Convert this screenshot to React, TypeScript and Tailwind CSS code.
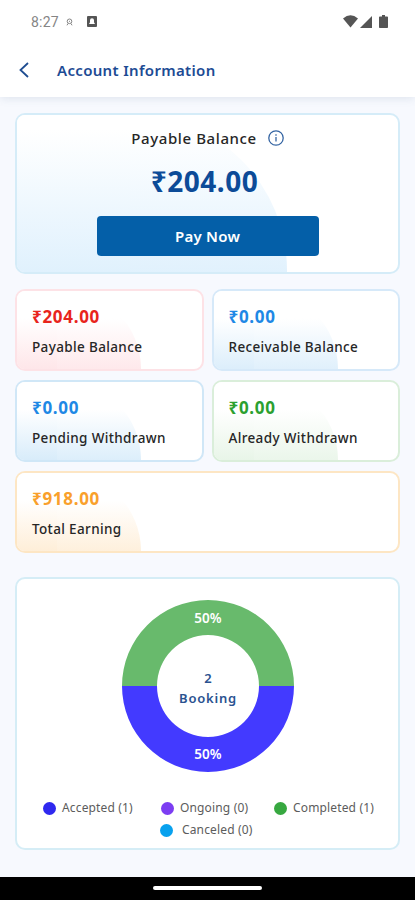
import React from "react";

interface IBalance {
  amount: string;
  label: string;
  amountColor: string;
  border: string;
  blob: string;
  wide?: boolean;
}

const balances: IBalance[] = [
  {
    amount: "₹204.00",
    label: "Payable Balance",
    amountColor: "text-[#e8241c]",
    border: "border-[#fde2e6]",
    blob: "to-[#fee6e9]",
  },
  {
    amount: "₹0.00",
    label: "Receivable Balance",
    amountColor: "text-[#1e88e5]",
    border: "border-[#d6e9f9]",
    blob: "to-[#dceefb]",
  },
  {
    amount: "₹0.00",
    label: "Pending Withdrawn",
    amountColor: "text-[#1e88e5]",
    border: "border-[#d0e7f7]",
    blob: "to-[#d8ecfa]",
  },
  {
    amount: "₹0.00",
    label: "Already Withdrawn",
    amountColor: "text-[#2ba02f]",
    border: "border-[#daeeda]",
    blob: "to-[#e8f5e8]",
  },
  {
    amount: "₹918.00",
    label: "Total Earning",
    amountColor: "text-[#f9a02b]",
    border: "border-[#fde6c4]",
    blob: "to-[#feeed8]",
    wide: true,
  },
];

const StatusBar: React.FC = () => (
  <div className="flex h-[43px] items-center pl-[31px] pr-[27px] text-[#555]">
    <span className="w-[29px] font-[Roboto] text-[14px] leading-none tracking-[0.2px] text-[#858585]">
      8:27
    </span>
    <svg className="ml-[6px] h-[8px] w-[7px]" viewBox="0 0 7 8" fill="none" stroke="#858585">
      <circle cx="3.5" cy="3.3" r="2.3" />
      <path d="M2 5.5L1 7.3M5 5.5L6 7.3M3 3.3h1" />
    </svg>
    <svg className="ml-[14px] h-[11px] w-[10px]" viewBox="0 0 10 11">
      <rect width="10" height="11" rx="1" fill="#555" />
      <path d="M5 2.2a2 2 0 0 1 2 2v2l1 1.8H2l1-1.8v-2a2 2 0 0 1 2-2z" fill="#fff" />
    </svg>
    <svg className="ml-auto h-[13px] w-[15px]" viewBox="0 0 15 13" fill="#555">
      <path d="M0 3.5Q7.5-3 15 3.5L7.5 12.5z" />
    </svg>
    <svg className="ml-[2px] h-[12px] w-[12px]" viewBox="0 0 12 12" fill="#555">
      <path d="M12 0v12H0z" />
    </svg>
    <svg className="ml-[7px] h-[13px] w-[9px]" viewBox="0 0 9 13" fill="#555">
      <path d="M3 0h3v1.5h2.2q.8 0 .8.8V12.2q0 .8-.8.8H.8Q0 13 0 12.2V2.3q0-.8.8-.8H3z" />
    </svg>
  </div>
);

const BalanceCard: React.FC<{ balance: IBalance }> = ({ balance }) => (
  <div
    className={`relative h-[82px] overflow-hidden rounded-[10px] border-2 bg-white pl-[15px] pt-[14px] ${balance.border} ${balance.wide ? "col-span-2" : ""}`}
  >
    <div
      className={`absolute -left-[34px] -top-px h-[158px] w-[158px] rounded-full bg-linear-to-b from-white from-18% to-54% ${balance.blob}`}
    />
    <div
      className={`absolute left-0 top-0 h-full w-[40px] bg-linear-to-b from-white from-35% ${balance.blob}`}
    />
    <div className="relative">
      <div className={`text-[17px] font-bold leading-[24px] tracking-[0.7px] ${balance.amountColor}`}>
        {balance.amount}
      </div>
      <div className="mt-[7px] text-[13.5px] font-medium leading-[22px] tracking-[0.36px] text-[#262626]">
        {balance.label}
      </div>
    </div>
  </div>
);

const BookingChart: React.FC = () => (
  <svg
    className="mx-auto block h-[172px] w-[172px] font-['Noto_Sans',sans-serif]"
    viewBox="0 0 172 172"
    textAnchor="middle"
  >
    <path d="M0 86a86 86 0 0 1 172 0h-35a51 51 0 0 0-102 0z" fill="#68ba6c" />
    <path d="M0 86a86 86 0 0 0 172 0h-35a51 51 0 0 1-102 0z" fill="#433aff" />
    <g fill="#fff" fontSize="13.5" fontWeight="600">
      <text x="86" y="23">50%</text>
      <text x="86" y="159">50%</text>
    </g>
    <g fill="#2a5290" fontSize="13" fontWeight="600">
      <text x="86" y="83">2</text>
      <text x="86" y="103" letterSpacing="0.8">Booking</text>
    </g>
  </svg>
);

const LegendItem: React.FC<{ color: string; label: string; className?: string }> = ({
  color,
  label,
  className = "gap-[6px]",
}) => (
  <div className={`flex items-center ${className}`}>
    <span className={`h-[13px] w-[13px] rounded-full ${color}`} />
    <span className="whitespace-nowrap text-[12px] leading-[22px] tracking-[0.15px] text-[#5c5c5c]">
      {label}
    </span>
  </div>
);

const App: React.FC = () => {
  return (
    <div className="flex h-[900px] w-[415px] flex-col overflow-hidden bg-[#f7f9fe] font-['Noto_Sans',sans-serif]">
      <header className="h-[97px] shrink-0 bg-white shadow-[0_2px_8px_rgba(80,110,140,0.13)]">
        <StatusBar />
        <div className="flex h-[54px] items-center pl-[19px]">
          <svg className="h-[16px] w-[10px]" viewBox="0 0 10 16" fill="none" stroke="#1f4d91" strokeWidth="1.8">
            <path d="M9 1L1.5 8L9 15" />
          </svg>
          <h1 className="ml-[28px] text-[15px] font-semibold tracking-[0.33px] text-[#1d4b94]">
            Account Information
          </h1>
        </div>
      </header>

      <main className="flex-1 px-[15px] pt-[16px]">
        <section className="relative h-[161px] overflow-hidden rounded-[10px] border-2 border-[#d5ecf8] bg-white">
          <div className="absolute -left-[43px] -top-px h-[313px] w-[313px] rounded-full bg-linear-to-b from-white from-5% to-[#e0f1fd] to-52%" />
          <div className="absolute left-0 top-0 h-full w-[113px] bg-linear-to-b from-white from-9% to-[#e0f1fd]" />
          <div className="relative flex flex-col items-center">
            <div className="mt-[12px] flex h-[22px] items-center gap-[11px] text-[15px] font-medium tracking-[0.6px] text-[#262626]">
              Payable Balance
              <svg className="h-4 w-4" viewBox="0 0 16 16" fill="none" stroke="#3565a3" strokeWidth="1.3">
                <circle cx="8" cy="8" r="7.2" />
                <path d="M8 7v4.5M8 4.2v1.5" />
              </svg>
            </div>
            <div className="mt-[12px] -translate-x-[3px] text-[28px] font-bold leading-[40px] tracking-[0.5px] text-[#0c4b98]">
              ₹204.00
            </div>
            <button className="mt-[15px] h-[40px] w-[222px] rounded-[4px] bg-[#045fa8] text-[15px] font-semibold tracking-[0.25px] text-white">
              Pay Now
            </button>
          </div>
        </section>

        <section className="mt-[15px] grid grid-cols-2 gap-x-[8px] gap-y-[9px]">
          {balances.map((balance) => (
            <BalanceCard key={balance.label} balance={balance} />
          ))}
        </section>

        <section className="mt-[24px] h-[273px] rounded-[10px] border-2 border-[#d5edf6] bg-white pt-[21px]">
          <BookingChart />
          <div className="mt-[25px] flex pl-[26px]">
            <LegendItem color="bg-[#2f28ef]" label="Accepted (1)" className="w-[118px] gap-[6px]" />
            <LegendItem color="bg-[#7c3df2]" label="Ongoing (0)" className="w-[113px] gap-[6px]" />
            <LegendItem color="bg-[#37a840]" label="Completed (1)" />
          </div>
          <LegendItem color="bg-[#08a1ee]" label="Canceled (0)" className="gap-[9px] pl-[143px]" />
        </section>
      </main>

      <footer className="flex h-[23px] shrink-0 justify-center bg-black pt-[9px]">
        <div className="h-[4px] w-[109px] rounded-full bg-white" />
      </footer>
    </div>
  );
};

export default App;
